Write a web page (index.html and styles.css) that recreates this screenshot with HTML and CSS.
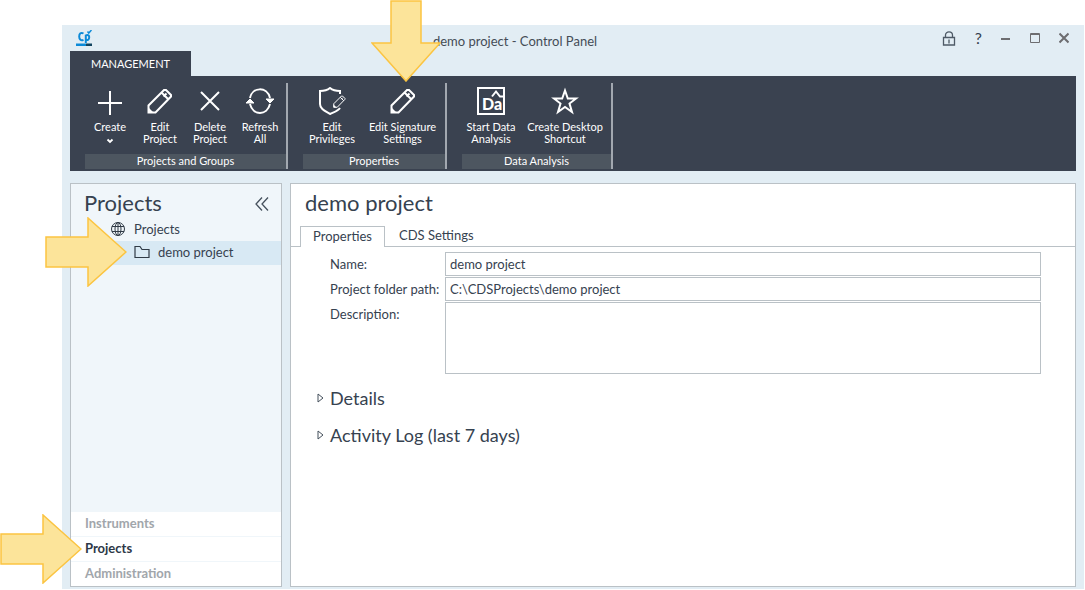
FILE: index.html
```html
<!DOCTYPE html>
<html lang="en">
<head>
<meta charset="utf-8">
<title>demo project - Control Panel</title>
<link rel="stylesheet" href="styles.css">
</head>
<body>
<svg class="defs" aria-hidden="true">
  <symbol id="pencil" viewBox="0 0 26 26"><path d="M1.500 24.500V17.500L17 2H19L24 7V8.500L8.500 24.500ZM14.500 4.500L21.500 11.500M16.500 8.500L19.500 5.500" fill="none" stroke="currentColor" stroke-width="2"/><path d="M1 19L7 25H1Z" fill="currentColor"/></symbol>
  <symbol id="arrow-right" viewBox="0 0 82 70"><path d="M1 20H43V1L81 35L43 69V50H1Z" fill="#fce49a" stroke="#fbc441" stroke-width="1.500"/></symbol>
</svg>
<div class="window">
  <header class="titlebar">
    <svg class="logo" width="16" height="17" viewBox="0 0 16 17"><g fill="none" stroke="#0c8ad8" stroke-width="2"><path d="M7.500 3.500C5 2 3.200 3.500 3.200 6.500S5 11 7.500 9.800"/><path d="M9.800 13V4.800M9.800 5.500C12 4.300 13.500 5.500 13.200 7.700S11.500 10.500 9.800 9.800"/><path d="M11.500 1.500L12.800 3L15.500 0" stroke-width="1.500"/></g><path d="M0 13.500H10V16H0Z" fill="#0c8ad8"/><path d="M10 13.500H16V16H10Z" fill="#12445f"/></svg>
    <h1 class="caption">demo project - Control Panel</h1>
    <div class="controls">
      <button aria-label="Lock"><svg width="14" height="15" viewBox="0 0 14 15" fill="none" stroke="#4e5a66"><path d="M1.500 6.500H12.500V14H1.500ZM3.500 6V4C3.500-.2 10.500-.2 10.500 4V6M7 8.500V12.500" stroke-width="1.300"/></svg></button>
      <button class="help" aria-label="Help">?</button>
      <button aria-label="Minimize"><svg width="10" height="12"><path d="M0 6H9V8H0Z" fill="#6d6d70"/></svg></button>
      <button aria-label="Maximize"><svg width="10" height="12" fill="none" stroke="#6d6d70"><path d="M.5 1.500H9.500V10.500H.5ZM0 2.500H10"/></svg></button>
      <button aria-label="Close"><svg width="10" height="12" fill="none" stroke="#6d6d70" stroke-width="2"><path d="M.5 1.500L9.500 10.500M9.500 1.500L.5 10.500"/></svg></button>
    </div>
  </header>
  <nav class="ribbon-tabs"><button class="ribbon-tab">MANAGEMENT</button></nav>
  <section class="ribbon">
    <div class="group">
      <div class="tools">
        <button class="tool"><svg width="28" height="28" viewBox="0 0 28 28"><path d="M14 4V28M2 16H26" stroke="#fff" stroke-width="2"/></svg><span class="label"><span>Create</span></span><svg class="drop" width="8" height="6"><path d="M1.500 1.500L4 4L6.500 1.500" fill="none" stroke="#fff" stroke-width="1.800"/></svg></button>
        <button class="tool"><svg width="26" height="28"><use href="#pencil" width="26" height="26" y="1"/></svg><span class="label"><span>Edit</span><span>Project</span></span></button>
        <button class="tool"><svg width="28" height="28"><path d="M5 5L23 23M23 5L5 23" stroke="#fff" stroke-width="2"/></svg><span class="label"><span>Delete</span><span>Project</span></span></button>
        <button class="tool"><svg width="30" height="28" fill="none" stroke="#fff" stroke-width="2"><path d="M5 11C7 0 22-1 25 11M25 17C22 29 8 29 5 17"/><path d="M21 12H29L25 16ZM1 16H9L5 12Z" fill="#fff" stroke-width="1"/></svg><span class="label"><span>Refresh</span><span>All</span></span></button>
      </div>
      <div class="group-name">Projects and Groups</div>
    </div>
    <div class="group">
      <div class="tools">
        <button class="tool medium"><svg width="28" height="28" viewBox="0 0 28 28"><path d="M22 7V4C17 4 15 3.500 12 1C9 3.500 7 4 2 4V17C2 22 7 24 12 27C16 25 20 24 22 21" fill="none" stroke="#fff" stroke-width="2"/><use href="#pencil" x="15" y="8" width="13" height="13"/></svg><span class="label"><span>Edit</span><span>Privileges</span></span></button>
        <button class="tool wide"><svg width="26" height="28"><use href="#pencil" width="26" height="26" y="1"/></svg><span class="label"><span>Edit Signature</span><span>Settings</span></span></button>
      </div>
      <div class="group-name">Properties</div>
    </div>
    <div class="group">
      <div class="tools">
        <button class="tool medium"><svg width="28" height="28" viewBox="0 0 28 28" fill="none" stroke="#fff" stroke-width="2"><path d="M1 1H27V27H1ZM15 9.500L19 4.500L23 9.500H27"/><text class="da" x="5" y="23">Da</text></svg><span class="label"><span>Start Data</span><span>Analysis</span></span></button>
        <button class="tool wider"><svg width="28" height="28"><path d="M14 3.500L16.800 11.500H25L18.500 16.500L21 25L14 20L7 25L9.500 16.500L3 11.500H11.200Z" fill="none" stroke="#fff" stroke-width="2"/></svg><span class="label"><span>Create Desktop</span><span>Shortcut</span></span></button>
      </div>
      <div class="group-name">Data Analysis</div>
    </div>
  </section>
  <div class="workspace">
    <aside class="sidebar">
      <div class="side-head"><h2>Projects</h2><button aria-label="Collapse"><svg width="14" height="14" fill="none" stroke="#45505c" stroke-width="1.300"><path d="M7 .5L1 7L7 13.500M13 .5L7 7L13 13.500"/></svg></button></div>
      <ul class="tree">
        <li class="node root"><svg width="16" height="16" fill="none" stroke="#303b46"><circle cx="8" cy="8" r="6.500"/><ellipse cx="8" cy="8" rx="3" ry="6.500"/><path d="M2 5.500H14M2 10.500H14M8 1.500V14.500"/></svg>Projects</li>
        <li class="node child"><svg width="16" height="14" fill="none" stroke="#303b46"><path d="M1 12.500V1.500H6L8 4.500H15V12.500Z" stroke-width="1.200"/></svg>demo project</li>
      </ul>
      <nav class="sections">
        <a href="#instruments">Instruments</a>
        <a href="#projects" class="current">Projects</a>
        <a href="#administration">Administration</a>
      </nav>
    </aside>
    <main class="detail">
      <h2>demo project</h2>
      <div class="tabs"><button class="tab active">Properties</button><button class="tab">CDS Settings</button></div>
      <form class="form">
        <label for="name">Name:</label><input id="name" value="demo project">
        <label for="path">Project folder path:</label><input id="path" value="C:\CDSProjects\demo project">
        <label for="desc">Description:</label><textarea id="desc"></textarea>
      </form>
      <button class="expander"><svg width="7" height="10"><path d="M1 1L6 5L1 9Z" fill="none" stroke="#45505c"/></svg>Details</button>
      <button class="expander"><svg width="7" height="10"><path d="M1 1L6 5L1 9Z" fill="none" stroke="#45505c"/></svg>Activity Log (last 7 days)</button>
    </main>
  </div>
</div>
<svg class="pointer signature" width="70" height="82" viewBox="0 0 70 82"><path d="M20 1H50V43H69L35 81L1 43H20Z" fill="#fce49a" stroke="#fbc441" stroke-width="1.500"/></svg>
<svg class="pointer tree-item" width="82" height="70"><use href="#arrow-right"/></svg>
<svg class="pointer section-item" width="82" height="70"><use href="#arrow-right"/></svg>
</body>
</html>
```
FILE: styles.css
```css
* { box-sizing: border-box; }
body {
  position: relative;
  display: flex;
  min-height: 100vh;
  margin: 0;
  padding: 25px 1px 1px 62px;
  background: #fff;
  color: #364250;
  font: 13px/16px Lato, "Noto Sans", sans-serif;
}
button, input, textarea {
  margin: 0;
  border: 0;
  padding: 0;
  background: none;
  color: inherit;
  font: inherit;
}
h1, h2, ul { margin: 0; padding: 0; font-weight: 400; }
svg { flex: none; }
.defs { position: absolute; width: 0; height: 0; }
.window {
  flex: 1;
  display: flex;
  flex-direction: column;
  padding: 0 8px 2px;
  background: #e2edf4;
}
.titlebar {
  display: grid;
  grid-template-columns: 1fr auto 1fr;
  height: 26px;
}
.logo { margin: 5px 0 0 6px; }
.caption { margin-left: -116px; padding-top: 8px; color: #444c56; font-size: 13px; }
.controls {
  display: flex;
  justify-content: flex-end;
  align-items: center;
  gap: 19px;
  padding-right: 7px;
}
.controls button { display: flex; }
.help { font-size: 16px; }
.ribbon-tabs { display: flex; }
.ribbon-tab {
  width: 121px;
  height: 25px;
  background: #3a4250;
  color: #fff;
  font-size: 11px;
}
.ribbon {
  display: flex;
  gap: 15px;
  height: 95px;
  padding: 7px 15px 2px;
  background: #3a4250;
  color: #fff;
}
.group {
  display: flex;
  flex-direction: column;
  justify-content: space-between;
  border-right: 2px solid #a2a8b0;
}
.tools { display: flex; padding-right: 1px; }
.tool {
  display: flex;
  flex-direction: column;
  align-items: center;
  width: 50px;
  padding-top: 4px;
  font-size: 11px;
  line-height: 12px;
  white-space: nowrap;
}
.label { display: flex; flex-direction: column; align-items: center; padding-top: 6px; }
.drop { margin-top: 5px; }
.medium { width: 58px; }
.wide { width: 83px; }
.wider { width: 90px; }
.da { font: 900 16px Lato, sans-serif; fill: #fff; stroke: none; }
.group-name {
  height: 15px;
  background: #4d5660;
  font-size: 11px;
  line-height: 14px;
  text-align: center;
}
.workspace { flex: 1; display: flex; gap: 8px; padding-top: 12px; }
.sidebar {
  display: flex;
  flex-direction: column;
  width: 212px;
  border: 1px solid #bac1c6;
  background: #f0f6fa;
}
.side-head {
  display: flex;
  justify-content: space-between;
  align-items: center;
  padding: 6px 12px 0 13px;
}
h2 { padding-bottom: 2px; font-size: 22px; line-height: 26px; }
.side-head button { display: flex; }
.tree { list-style: none; }
.node { display: flex; align-items: center; gap: 8px; height: 24px; padding-bottom: 2px; }
.root { height: 23px; padding-left: 39px; }
.child { padding-left: 63px; background: #d8e9f4; }
.sections {
  display: flex;
  flex-direction: column;
  gap: 1px;
  margin-top: auto;
}
.sections a {
  height: 24px;
  padding-left: 14px;
  background: #fff;
  color: #a1a6ab;
  font-weight: 700;
  line-height: 22px;
  text-decoration: none;
}
.sections .current { color: #2d3847; }
.detail {
  flex: 1;
  display: flex;
  flex-direction: column;
  align-items: flex-start;
  border: 1px solid #bac1c6;
  background: #fff;
}
.detail h2 { padding: 6px 14px 2px; }
.tabs {
  display: flex;
  align-self: stretch;
  margin-top: 8px;
  padding-left: 9px;
  border-bottom: 1px solid #bac1c6;
}
.tab { height: 20px; padding: 0 14px 2px; }
.active {
  width: 85px;
  height: 21px;
  margin-bottom: -1px;
  border: 1px solid #bac1c6;
  border-bottom: 0;
  padding: 0 0 2px;
  background: #fff;
}
.form {
  display: grid;
  grid-template-columns: 115px 1fr;
  row-gap: 1px;
  align-self: stretch;
  padding: 5px 34px 0 39px;
}
.form label { line-height: 24px; }
.form input, .form textarea {
  height: 24px;
  width: 100%;
  border: 1px solid #bac1c6;
  padding: 0 4px;
}
.form textarea { height: 72px; resize: none; }
.expander {
  display: flex;
  align-items: center;
  gap: 6px;
  height: 24px;
  margin: 13px 0 0 26px;
  padding-bottom: 2px;
  font-size: 18px;
}
.pointer { position: absolute; }
.signature { top: 0; left: 371px; }
.tree-item { top: 217px; left: 45px; }
.section-item { top: 514px; left: 0; }
```
